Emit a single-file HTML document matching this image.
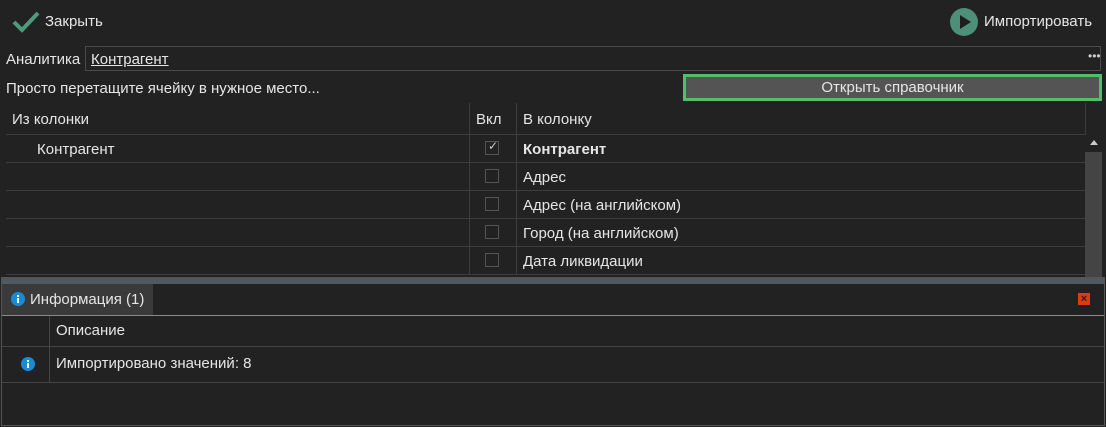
<!DOCTYPE html><html><head><style>
body{margin:0;width:1106px;height:427px;background:#222;font-family:"Liberation Sans",sans-serif;font-size:15px;color:#e6e6e6;position:relative;overflow:hidden}
.a{position:absolute}
.hl{position:absolute;height:1px;background:#3d3d3d}
.vl{position:absolute;width:1px;background:#3d3d3d}
.cb{position:absolute;left:485px;width:14px;height:14px;border:1px solid #555;box-sizing:border-box}
</style></head><body>
<svg class="a" style="left:12px;top:10px" width="28" height="24"><path d="M2 12 L10 20 L26 3" stroke="#4e9a7a" stroke-width="4" fill="none"/></svg>
<div class="a" style="left:45px;top:13px">Закрыть</div>
<svg class="a" style="left:950px;top:8px" width="28" height="28"><circle cx="14" cy="14" r="14" fill="#4d8f78"/><path d="M10 7 L21 14 L10 21Z" fill="#1e1e1e"/></svg>
<div class="a" style="left:984px;top:13px">Импортировать</div>
<div class="a" style="left:6px;top:51px">Аналитика</div>
<div class="a" style="left:85px;top:46px;width:1016px;height:25px;border:1px solid #4a4a4a;box-sizing:border-box"></div>
<div class="a" style="left:91px;top:51px;text-decoration:underline">Контрагент</div>
<div class="a" style="left:1088px;top:49px;color:#ccc;font-size:12px">•••</div>
<div class="a" style="left:6px;top:80px">Просто перетащите ячейку в нужное место...</div>
<div class="a" style="left:683px;top:74px;width:419px;height:27px;border:3px solid #4fbf6a;box-sizing:border-box;background:#545454;text-align:center;line-height:21px">Открыть справочник</div>
<div class="vl" style="left:469px;top:103px;height:172px"></div>
<div class="vl" style="left:516px;top:103px;height:172px"></div>
<div class="vl" style="left:1085px;top:103px;height:31px"></div>
<div class="a" style="left:12px;top:111px">Из колонки</div>
<div class="a" style="left:476px;top:111px">Вкл</div>
<div class="a" style="left:523px;top:111px">В колонку</div>
<div class="hl" style="left:6px;top:134px;width:1080px"></div>
<div class="hl" style="left:6px;top:162px;width:1080px"></div>
<div class="hl" style="left:6px;top:190px;width:1080px"></div>
<div class="hl" style="left:6px;top:218px;width:1080px"></div>
<div class="hl" style="left:6px;top:246px;width:1080px"></div>
<div class="hl" style="left:6px;top:274px;width:1080px"></div>
<div class="a" style="left:37px;top:141px">Контрагент</div>
<div class="cb" style="top:141px"></div><div class="a" style="left:488px;top:139px;font-size:12px;color:#ccc">✓</div>
<div class="a" style="left:523px;top:141px;font-weight:bold">Контрагент</div>
<div class="cb" style="top:169px"></div><div class="a" style="left:523px;top:169px">Адрес</div>
<div class="cb" style="top:197px"></div><div class="a" style="left:523px;top:197px">Адрес (на английском)</div>
<div class="cb" style="top:225px"></div><div class="a" style="left:523px;top:225px">Город (на английском)</div>
<div class="cb" style="top:253px"></div><div class="a" style="left:523px;top:253px">Дата ликвидации</div>
<div class="a" style="left:1090px;top:140px;width:0;height:0;border-left:4px solid transparent;border-right:4px solid transparent;border-bottom:5px solid #ccc"></div>
<div class="a" style="left:1085px;top:152px;width:17px;height:125px;background:#444"></div>
<div class="a" style="left:1px;top:277px;width:1104px;height:149px;border:1px solid #555;border-top:2px solid #555;box-sizing:border-box;background:#222"></div>
<div class="a" style="left:2px;top:279px;width:1102px;height:5px;background:#4f5863"></div>
<div class="a" style="left:2px;top:284px;width:151px;height:31px;background:#3a3a3a"></div>
<svg class="a" style="left:11px;top:292px" width="14" height="14"><circle cx="7" cy="7" r="7" fill="#1a8ad4"/><rect x="6" y="6" width="2" height="5" fill="#fff"/><rect x="6" y="3" width="2" height="2" fill="#fff"/></svg>
<div class="a" style="left:30px;top:291px">Информация (1)</div>
<div class="a" style="left:1078px;top:293px;width:12px;height:12px;background:#e03a10;color:#222;font-size:11px;line-height:12px;text-align:center;font-weight:bold">×</div>
<div class="a" style="left:2px;top:315px;width:1102px;height:1px;background:#8a8a8a"></div>
<div class="vl" style="left:49px;top:316px;height:66px;background:#444"></div>
<div class="hl" style="left:2px;top:346px;width:1102px;background:#444"></div>
<div class="hl" style="left:2px;top:382px;width:1102px;background:#444"></div>
<div class="a" style="left:56px;top:322px">Описание</div>
<svg class="a" style="left:21px;top:357px" width="14" height="14"><circle cx="7" cy="7" r="7" fill="#1a8ad4"/><rect x="6" y="6" width="2" height="5" fill="#fff"/><rect x="6" y="3" width="2" height="2" fill="#fff"/></svg>
<div class="a" style="left:56px;top:355px">Импортировано значений: 8</div>
</body></html>
